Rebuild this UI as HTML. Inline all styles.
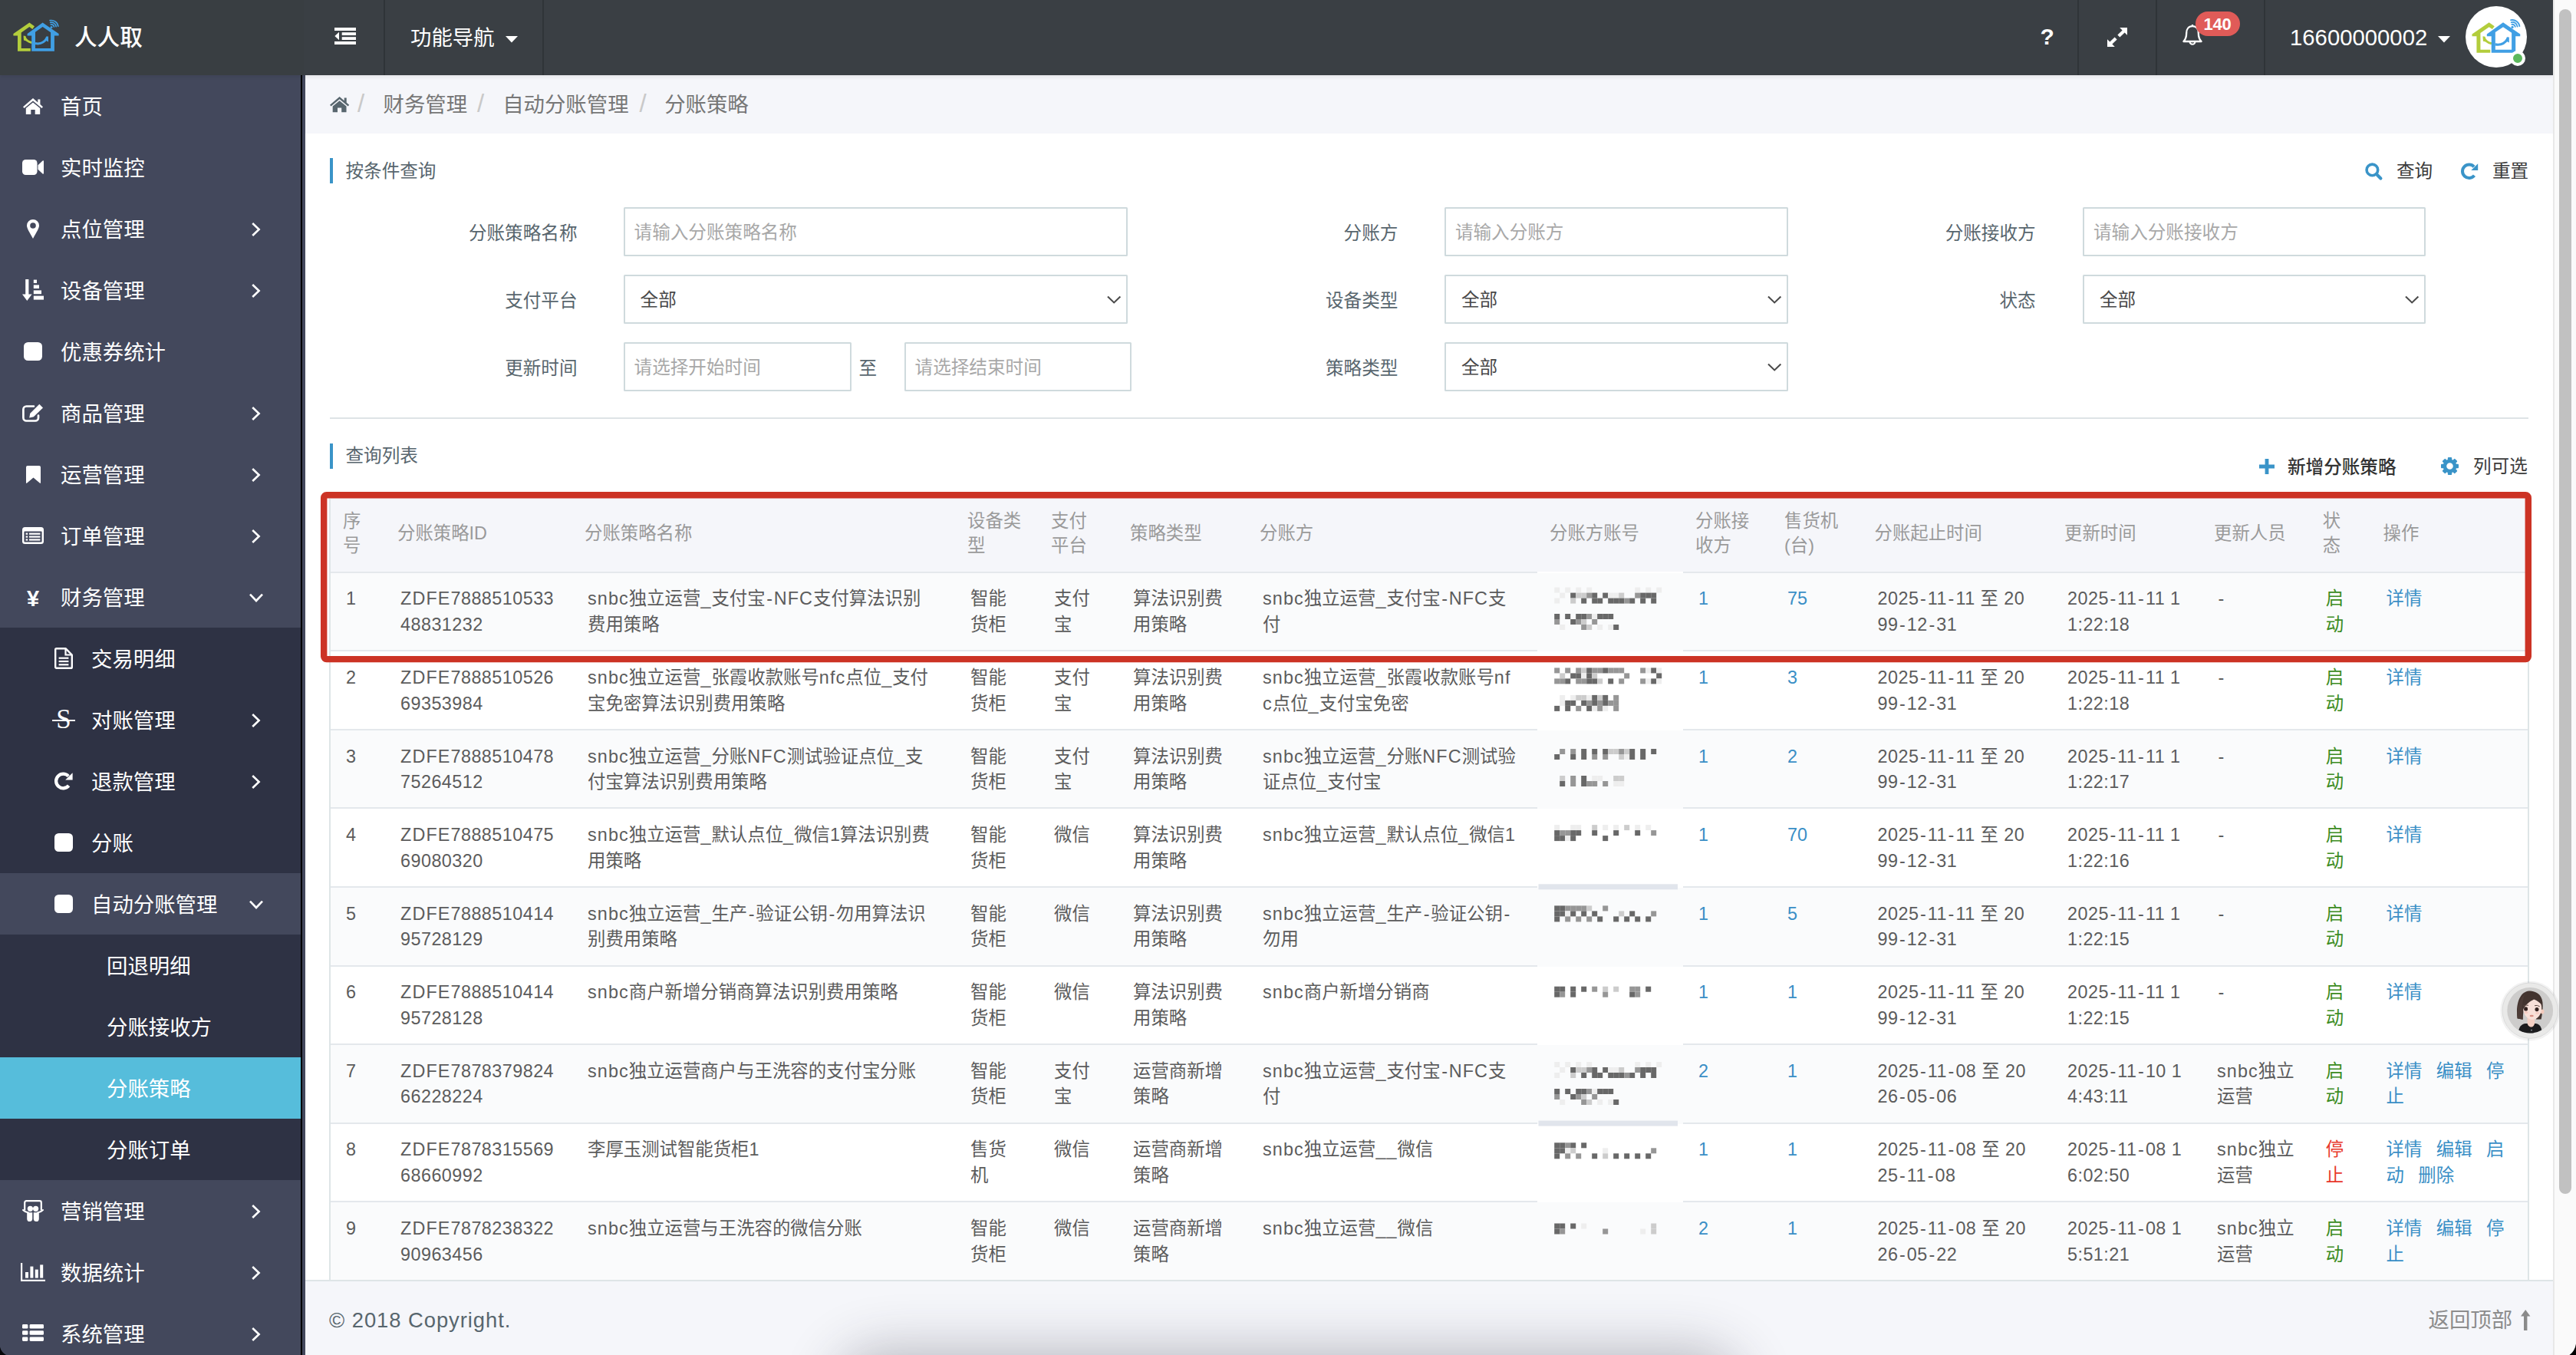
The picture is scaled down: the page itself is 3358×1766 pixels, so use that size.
<!DOCTYPE html>
<html lang="zh-CN">
<head>
<meta charset="utf-8">
<title>分账策略</title>
<style>
*{box-sizing:border-box;margin:0;padding:0}
html,body{width:3358px;height:1766px;background:#f5f6fa}
#app{position:relative;width:3358px;height:1766px;overflow:hidden;background:#f5f6fa}
body{font-family:"Liberation Sans","Noto Sans CJK SC",sans-serif;color:#58666e;font-size:23.6px;position:relative;-webkit-font-smoothing:antialiased}
.abs{position:absolute}
svg{display:block}
.ic{position:absolute;overflow:visible}
/* header */
#hdr{position:absolute;left:0;top:0;width:3328px;height:98px;background:#3a3f44;z-index:5;box-shadow:0 3px 4px rgba(0,0,0,.06)}
#hdr .logo-bg{position:absolute;left:0;top:0;width:396px;height:98px;background:#393e42}
#hdr .vdiv{position:absolute;top:0;width:2px;height:98px;background:#2f3438}
#hdr .t{position:absolute;color:#fff;white-space:nowrap}
/* sidebar */
#side{position:absolute;left:0;top:98px;width:398px;height:1668px;background:#43485c;z-index:4;overflow:hidden}
#side .line{position:absolute;left:392px;top:0;width:2px;height:1668px;background:#000;z-index:3}
#side .sub{position:absolute;left:0;top:720px;width:392px;height:720px;background:#2e3244}
#side .sub .open{position:absolute;left:0;top:320px;width:392px;height:80px;background:#43485c}
#side .sub .act{position:absolute;left:0;top:560px;width:392px;height:80px;background:#56bddb}
.it{position:absolute;left:0;width:392px;height:80px;line-height:82px;color:#fff;font-size:27.4px;white-space:nowrap}
.it .tx{position:absolute;left:79px;top:0}
.it.l2 .tx{left:119px}
.it.l3 .tx{left:139px}
.it svg{position:absolute}
.it .chev{left:326px;top:30px}
/* content */
#crumb{position:absolute;left:398px;top:98px;width:2930px;height:76px;background:#f5f6fa;font-size:27.4px;color:#777;line-height:78px;white-space:nowrap}
#panel{position:absolute;left:398px;top:174px;width:2930px;height:1494px;background:#fff}
#foot{position:absolute;left:398px;top:1668px;width:2930px;height:98px;background:#f5f6fa;border-top:2px solid #dee5e7;font-size:27.4px;line-height:101.5px}

/* table */
.tb{position:absolute;border-collapse:separate;border-spacing:0;table-layout:fixed;width:2868px;border:2px solid #dee5e7;border-top-color:#f5f6fa;font-size:23.4px;color:#5c5c5c}
.tb th{background:#f5f6fa;color:#9a9a9a;font-weight:normal;text-align:left;vertical-align:middle;height:96px;padding:0 0 5px 16px;line-height:32.3px;border-bottom:2px solid #e4e8ec;white-space:nowrap}
.tb td{height:102.55px;vertical-align:top;padding:17.7px 0 0 20px;line-height:33.7px;border-bottom:2px solid #e4e8ec;white-space:nowrap;overflow:hidden}
.tb tbody tr:nth-child(odd) td{background:#fafbfc}
.tb tbody tr:last-child td{border-bottom:none;height:100.5px}
.tb a{color:#3a8fc6}
.tb .g{color:#3c8c22}
.tb .r{color:#e8382c}
.tb td.op a{margin-right:18.4px}
.tb td.num{letter-spacing:.45px}
.tb .la{letter-spacing:1.1px}
.tb .hy{padding:0 1.6px}
.tb td:nth-child(8),.tb th:nth-child(8){border-bottom-color:transparent}
.tb th:nth-child(8){background-clip:padding-box}
/* scrollbar */
#sbar{position:absolute;left:3328px;top:0;width:30px;height:1766px;background:#fafafa;border-left:2px solid #e8e8e8;z-index:6}
#sbar .th{position:absolute;left:6px;top:12px;width:16px;height:1544px;border-radius:8px;background:#c1c1c1}
</style>
</head>
<body>
<div id="app">
<div id="hdr">
  <div class="logo-bg"></div>
  <div class="vdiv" style="left:500px"></div>
  <div class="vdiv" style="left:707px"></div>
  <div class="vdiv" style="left:2708px"></div>
  <div class="vdiv" style="left:2810px"></div>
  <div class="vdiv" style="left:2951px"></div>
  <svg class="ic" style="left:0;top:0" width="3328" height="98" viewBox="0 0 3328 98"><g transform="translate(0.00 0.00) scale(1.0)"><path fill="#b3cd3c" d="M38.3 29.6 L45 34.3 L42.3 37.9 L38.3 35.1 L27.7 42.5 V63 H39.8 V66.8 H23 V46.6 H17.4 V43.9 Z"/><path fill="none" stroke="#b3cd3c" stroke-width="2.9" d="M32 48.2 Q34.5 54 41.4 55.6"/><path fill="#b3cd3c" d="M30.6 46.6 L33.4 47 L34.6 53.4 L31 52.6 Z"/><path fill="#409fe4" fill-rule="evenodd" d="M55.6 29.6 L76.6 43.9 V46.6 H70.9 V66.8 H41.2 V46.6 H35.6 V43.9 Z M55.6 35.1 L46 41.7 V63 H66.1 V42.2 Z"/><path fill="none" stroke="#409fe4" stroke-width="3" d="M46 56.6 Q56 58.4 61.2 49.6"/><path fill="#409fe4" d="M60.2 47.4 L63 47.6 L63 54.4 L58.6 52.2 Z"/><circle cx="67.0" cy="35.4" r="1.5" fill="#409fe4"/><path d="M66.27 31.98 A3.5 3.5 0 0 1 70.47 34.91" fill="none" stroke="#409fe4" stroke-width="1.7" stroke-linecap="round"/><path d="M65.71 29.34 A6.2 6.2 0 0 1 73.14 34.54" fill="none" stroke="#409fe4" stroke-width="1.7" stroke-linecap="round"/><path d="M65.15 26.69 A8.9 8.9 0 0 1 75.81 34.16" fill="none" stroke="#409fe4" stroke-width="1.7" stroke-linecap="round"/></g></svg>
<div class="t" style="left:97px;top:0;line-height:98px;font-size:29.6px;font-weight:500">人人取</div>
<svg class="ic" style="left:436px;top:36px" width="28" height="22" viewBox="0 0 28 22" ><g fill="#fff"><rect x="0" y="0" width="28" height="4"/><rect x="9.7" y="6.2" width="18.3" height="3.8"/><rect x="9.7" y="12.2" width="18.3" height="3.8"/><rect x="0" y="18" width="28" height="4"/><path d="M6 5.7 V16.3 L0.4 11 Z"/></g></svg>
<div class="t" style="left:535px;top:0;line-height:100px;font-size:27.4px">功能导航</div>
<svg class="ic" style="left:659.2px;top:47px" width="16" height="8.4" viewBox="0 0 16 8.4" ><path fill="#fff" d="M0 0 H16 L8 8.4 Z"/></svg>
<div class="t" style="left:2659.5px;top:0;line-height:95px;font-size:30px;font-weight:bold">?</div>
<svg class="ic" style="left:2747px;top:35.6px" width="26" height="25" viewBox="0 0 26 25" ><g fill="#fff"><path d="M16.2 0 H26 V9.8 L22.6 6.4 L16.4 12.4 L13.4 9.4 L19.6 3.4 Z"/><path d="M9.8 25 H0 V15.2 L3.4 18.6 L9.6 12.6 L12.6 15.6 L6.4 21.6 Z"/></g></svg>
<svg class="ic" style="left:2845px;top:31.5px" width="26" height="28" viewBox="0 0 26 28" ><path fill="none" stroke="#fff" stroke-width="2.3" stroke-linejoin="round" d="M13 2.2 C7.6 2.2 5.2 6.4 5.2 11 C5.2 17 3.4 20 1.4 22 H24.6 C22.6 20 20.8 17 20.8 11 C20.8 6.4 18.4 2.2 13 2.2 Z"/><path fill="none" stroke="#fff" stroke-width="2.1" d="M9.6 22.4 A3.4 3.4 0 0 0 16.4 22.4"/><path stroke="#fff" stroke-width="2.2" d="M13 0 V2.4"/></svg>
<div class="abs" style="left:2861.5px;top:14.6px;width:58px;height:32.6px;border-radius:16.3px;background:#e05b58;color:#fff;font-size:22px;font-weight:bold;line-height:33px;text-align:center;letter-spacing:-0.2px">140</div>
<div class="t" style="left:2985px;top:0;line-height:98px;font-size:29.3px;font-weight:normal">16600000002</div>
<svg class="ic" style="left:3178px;top:47px" width="16" height="8.4" viewBox="0 0 16 8.4" ><path fill="#fff" d="M0 0 H16 L8 8.4 Z"/></svg>
<div class="abs" style="left:3214px;top:8px;width:80px;height:80px;border-radius:40px;background:#fff"></div>
<svg class="ic" style="left:0;top:0" width="3328" height="98" viewBox="0 0 3328 98"><g transform="translate(3204.06 -2.08) scale(1.06)"><path fill="#b3cd3c" d="M38.3 29.6 L45 34.3 L42.3 37.9 L38.3 35.1 L27.7 42.5 V63 H39.8 V66.8 H23 V46.6 H17.4 V43.9 Z"/><path fill="none" stroke="#b3cd3c" stroke-width="2.9" d="M32 48.2 Q34.5 54 41.4 55.6"/><path fill="#b3cd3c" d="M30.6 46.6 L33.4 47 L34.6 53.4 L31 52.6 Z"/><path fill="#409fe4" fill-rule="evenodd" d="M55.6 29.6 L76.6 43.9 V46.6 H70.9 V66.8 H41.2 V46.6 H35.6 V43.9 Z M55.6 35.1 L46 41.7 V63 H66.1 V42.2 Z"/><path fill="none" stroke="#409fe4" stroke-width="3" d="M46 56.6 Q56 58.4 61.2 49.6"/><path fill="#409fe4" d="M60.2 47.4 L63 47.6 L63 54.4 L58.6 52.2 Z"/><circle cx="67.0" cy="35.4" r="1.5" fill="#409fe4"/><path d="M66.27 31.98 A3.5 3.5 0 0 1 70.47 34.91" fill="none" stroke="#409fe4" stroke-width="1.7" stroke-linecap="round"/><path d="M65.71 29.34 A6.2 6.2 0 0 1 73.14 34.54" fill="none" stroke="#409fe4" stroke-width="1.7" stroke-linecap="round"/><path d="M65.15 26.69 A8.9 8.9 0 0 1 75.81 34.16" fill="none" stroke="#409fe4" stroke-width="1.7" stroke-linecap="round"/></g></svg>
<div class="abs" style="left:3272.2px;top:66.2px;width:19.6px;height:19.6px;border-radius:10px;background:#5cb85c;border:4px solid #fff"></div>
</div>
<div id="side">
  <div class="sub"><div class="open"></div><div class="act"></div></div>
  <div class="line"></div>
  <div class="it l1" style="top:0.5px"><svg class="ic" style="left:30.0px;top:29.1px" width="26.0" height="21.0" viewBox="0 0 26.0 21.0" ><g fill="#fff" transform="scale(1.0)"><path d="M13 0 L0 11.2 L1.6 13 L13 3.4 L24.4 13 L26 11.2 L22.4 8.1 V1.5 H19.3 V5.4 Z"/><path d="M13 5.4 L3.8 13 V21 H10.3 V15 H15.7 V21 H22.2 V13 Z"/></g></svg><span class="tx">首页</span></div>
<div class="it l1" style="top:80.5px"><svg class="ic" style="left:29.0px;top:29.6px" width="28" height="20" viewBox="0 0 28 20" ><g fill="#fff"><rect x="0" y="0" width="19.5" height="20" rx="4.5"/><path d="M20.5 7.2 L26.6 1.6 Q28 0.6 28 2.4 V17.6 Q28 19.4 26.6 18.4 L20.5 12.8 Z"/></g></svg><span class="tx">实时监控</span></div>
<div class="it l1" style="top:160.5px"><svg class="ic" style="left:35.0px;top:27.1px" width="16" height="25" viewBox="0 0 16 25" ><path fill="#fff" fill-rule="evenodd" d="M8 0 A8 8 0 0 1 16 8 C16 11.5 13 16 8 25 C3 16 0 11.5 0 8 A8 8 0 0 1 8 0 Z M8 4.2 A3.8 3.8 0 1 0 8 11.8 A3.8 3.8 0 1 0 8 4.2 Z"/></svg><span class="tx">点位管理</span><svg class="ic" style="left:326.5px;top:30.299999999999997px" width="14" height="20" viewBox="0 0 14 20" ><path fill="none" stroke="#fff" stroke-width="2.6" d="M2.2 2 L10.6 10 L2.2 18"/></svg></div>
<div class="it l1" style="top:240.5px"><svg class="ic" style="left:29.0px;top:25.6px" width="28" height="28" viewBox="0 0 28 28" ><g fill="#fff"><rect x="4.2" y="0" width="4.2" height="21"/><path d="M0 19.5 H12.6 L6.3 28 Z"/><rect x="14.8" y="0.6" width="4.2" height="4.4"/><rect x="14.8" y="7.4" width="7.2" height="4.6"/><rect x="14.8" y="14.4" width="10.2" height="4.8"/><rect x="14.8" y="21.6" width="13.2" height="5"/></g></svg><span class="tx">设备管理</span><svg class="ic" style="left:326.5px;top:30.299999999999997px" width="14" height="20" viewBox="0 0 14 20" ><path fill="none" stroke="#fff" stroke-width="2.6" d="M2.2 2 L10.6 10 L2.2 18"/></svg></div>
<div class="it l1" style="top:320.5px"><svg class="ic" style="left:31.0px;top:27.6px" width="24" height="24" viewBox="0 0 24 24" ><rect x="0" y="0" width="24" height="24" rx="5.5" fill="#fff"/></svg><span class="tx">优惠券统计</span></div>
<div class="it l1" style="top:400.5px"><svg class="ic" style="left:29.0px;top:27.6px" width="28" height="24" viewBox="0 0 28 24" ><path fill="none" stroke="#fff" stroke-width="2.7" stroke-linecap="round" d="M21 15.5 V18.5 A4 4 0 0 1 17 22.5 H5.4 A4 4 0 0 1 1.4 18.5 V7.5 A4 4 0 0 1 5.4 3.5 H15"/><path fill="#fff" d="M22.3 0.8 L27 5.4 L14.8 17.3 L9.2 18.5 L10.3 12.8 Z"/><path fill="#43485c" d="M12.4 13.6 L14.2 15.3 L11.6 15.9 Z M21 4.4 L22.3 5.6 L14 13.7 L12.8 12.5 Z" opacity=".0"/></svg><span class="tx">商品管理</span><svg class="ic" style="left:326.5px;top:30.299999999999997px" width="14" height="20" viewBox="0 0 14 20" ><path fill="none" stroke="#fff" stroke-width="2.6" d="M2.2 2 L10.6 10 L2.2 18"/></svg></div>
<div class="it l1" style="top:480.5px"><svg class="ic" style="left:33.5px;top:28.1px" width="19" height="23" viewBox="0 0 19 23" ><path fill="#fff" d="M2 0 H17 A2 2 0 0 1 19 2 V22 Q19 23.4 17.8 22.5 L9.5 15.6 L1.2 22.5 Q0 23.4 0 22 V2 A2 2 0 0 1 2 0Z"/></svg><span class="tx">运营管理</span><svg class="ic" style="left:326.5px;top:30.299999999999997px" width="14" height="20" viewBox="0 0 14 20" ><path fill="none" stroke="#fff" stroke-width="2.6" d="M2.2 2 L10.6 10 L2.2 18"/></svg></div>
<div class="it l1" style="top:560.5px"><svg class="ic" style="left:29.0px;top:28.6px" width="28" height="22" viewBox="0 0 28 22" ><rect x="0" y="0" width="28" height="22" rx="3.5" fill="#fff"/><rect x="2.4" y="5.6" width="23.2" height="14" rx="1" fill="#43485c"/><g fill="#fff"><rect x="4.6" y="7.6" width="2.6" height="2.2"/><rect x="9" y="7.6" width="14.4" height="2.2"/><rect x="4.6" y="11.5" width="2.6" height="2.2"/><rect x="9" y="11.5" width="14.4" height="2.2"/><rect x="4.6" y="15.4" width="2.6" height="2.2"/><rect x="9" y="15.4" width="14.4" height="2.2"/></g></svg><span class="tx">订单管理</span><svg class="ic" style="left:326.5px;top:30.299999999999997px" width="14" height="20" viewBox="0 0 14 20" ><path fill="none" stroke="#fff" stroke-width="2.6" d="M2.2 2 L10.6 10 L2.2 18"/></svg></div>
<div class="it l1" style="top:640.5px"><span class="abs" style="left:33px;top:0;width:20px;text-align:center;font-weight:bold;font-size:29px">¥</span><span class="tx">财务管理</span><svg class="ic" style="left:323.7px;top:33.3px" width="20" height="14" viewBox="0 0 20 14" ><path fill="none" stroke="#fff" stroke-width="2.6" d="M2 2.6 L10.0 11 L18 2.6"/></svg></div>
<div class="it l2" style="top:720.5px"><svg class="ic" style="left:71.0px;top:25.6px" width="24" height="28" viewBox="0 0 24 28" ><path fill="none" stroke="#fff" stroke-width="2.4" stroke-linejoin="round" d="M1.2 2.6 A1.4 1.4 0 0 1 2.6 1.2 H14.5 L22.8 9.5 V25.4 A1.4 1.4 0 0 1 21.4 26.8 H2.6 A1.4 1.4 0 0 1 1.2 25.4 Z"/><path fill="none" stroke="#fff" stroke-width="2.2" d="M14.5 1.2 V9.5 H22.8"/><g fill="#fff"><rect x="5.6" y="12.6" width="12.8" height="2.2"/><rect x="5.6" y="16.9" width="12.8" height="2.2"/><rect x="5.6" y="21.2" width="12.8" height="2.2"/></g></svg><span class="tx">交易明细</span></div>
<div class="it l2" style="top:800.5px"><span class="abs" style="left:71px;top:-2px;width:24px;text-align:center;font-family:'Liberation Serif',serif;font-size:35px">S</span><span class="abs" style="left:68px;top:39px;width:30px;height:2.4px;background:#fff"></span><span class="tx">对账管理</span><svg class="ic" style="left:326.5px;top:30.299999999999997px" width="14" height="20" viewBox="0 0 14 20" ><path fill="none" stroke="#fff" stroke-width="2.6" d="M2.2 2 L10.6 10 L2.2 18"/></svg></div>
<div class="it l2" style="top:880.5px"><svg class="ic" style="left:71.0px;top:27.6px" width="24.0" height="24.0" viewBox="0 0 24.0 24.0" ><g transform="scale(1.0)"><path fill="none" stroke="#fff" stroke-width="4.3" d="M18.6 17.9 A9.3 9.3 0 1 1 18.2 5.6"/><path fill="#fff" d="M23.6 1.2 V10.6 H14.2 Z"/></g></svg><span class="tx">退款管理</span><svg class="ic" style="left:326.5px;top:30.299999999999997px" width="14" height="20" viewBox="0 0 14 20" ><path fill="none" stroke="#fff" stroke-width="2.6" d="M2.2 2 L10.6 10 L2.2 18"/></svg></div>
<div class="it l2" style="top:960.5px"><svg class="ic" style="left:71.0px;top:27.6px" width="24" height="24" viewBox="0 0 24 24" ><rect x="0" y="0" width="24" height="24" rx="5.5" fill="#fff"/></svg><span class="tx">分账</span></div>
<div class="it l2" style="top:1040.5px"><svg class="ic" style="left:71.0px;top:27.6px" width="24" height="24" viewBox="0 0 24 24" ><rect x="0" y="0" width="24" height="24" rx="5.5" fill="#fff"/></svg><span class="tx">自动分账管理</span><svg class="ic" style="left:323.7px;top:33.3px" width="20" height="14" viewBox="0 0 20 14" ><path fill="none" stroke="#fff" stroke-width="2.6" d="M2 2.6 L10.0 11 L18 2.6"/></svg></div>
<div class="it l3" style="top:1120.5px"><span class="tx">回退明细</span></div>
<div class="it l3" style="top:1200.5px"><span class="tx">分账接收方</span></div>
<div class="it l3" style="top:1280.5px"><span class="tx">分账策略</span></div>
<div class="it l3" style="top:1360.5px"><span class="tx">分账订单</span></div>
<div class="it l1" style="top:1440.5px"><svg class="ic" style="left:29.0px;top:25.6px" width="28" height="28" viewBox="0 0 28 28" ><path fill="none" stroke="#fff" stroke-width="2.2" stroke-linejoin="round" d="M3.2 13.5 V3.4 A2.2 2.2 0 0 1 5.4 1.2 H22.6 A2.2 2.2 0 0 1 24.8 3.4 V13.5"/><path fill="none" stroke="#fff" stroke-width="2" stroke-linecap="round" d="M1 13 Q4 16 8 16.6 M27 13 Q24 16 20 16.6"/><circle cx="10.4" cy="11.3" r="3.6" fill="#fff"/><circle cx="17.6" cy="11.3" r="3.6" fill="#fff"/><path fill="#fff" d="M6.2 16.2 H13.2 V24.6 A3.4 3.4 0 0 1 9.8 28 A3.6 3.6 0 0 1 6.2 24.4 Z M14.8 16.2 H21.8 V24.4 A3.6 3.6 0 0 1 18.2 28 A3.4 3.4 0 0 1 14.8 24.6 Z"/></svg><span class="tx">营销管理</span><svg class="ic" style="left:326.5px;top:30.299999999999997px" width="14" height="20" viewBox="0 0 14 20" ><path fill="none" stroke="#fff" stroke-width="2.6" d="M2.2 2 L10.6 10 L2.2 18"/></svg></div>
<div class="it l1" style="top:1520.5px"><svg class="ic" style="left:27.0px;top:27.6px" width="32" height="24" viewBox="0 0 32 24" ><g fill="#fff"><rect x="0" y="0" width="2.2" height="24"/><rect x="0" y="21.8" width="32" height="2.2"/><rect x="6" y="12" width="4" height="7.6"/><rect x="12.4" y="4.6" width="4" height="15"/><rect x="18.8" y="8.6" width="4" height="11"/><rect x="25.2" y="2.4" width="4" height="17.2"/></g></svg><span class="tx">数据统计</span><svg class="ic" style="left:326.5px;top:30.299999999999997px" width="14" height="20" viewBox="0 0 14 20" ><path fill="none" stroke="#fff" stroke-width="2.6" d="M2.2 2 L10.6 10 L2.2 18"/></svg></div>
<div class="it l1" style="top:1600.5px"><svg class="ic" style="left:29.0px;top:27.700000000000003px" width="28" height="22" viewBox="0 0 28 22" ><rect x="0" y="0" width="7.4" height="5.6" rx="1.4" fill="#fff"/><rect x="9.6" y="0" width="18.4" height="5.6" rx="1.4" fill="#fff"/><rect x="0" y="8.2" width="7.4" height="5.6" rx="1.4" fill="#fff"/><rect x="9.6" y="8.2" width="18.4" height="5.6" rx="1.4" fill="#fff"/><rect x="0" y="16.4" width="7.4" height="5.6" rx="1.4" fill="#fff"/><rect x="9.6" y="16.4" width="18.4" height="5.6" rx="1.4" fill="#fff"/></svg><span class="tx">系统管理</span><svg class="ic" style="left:326.5px;top:30.299999999999997px" width="14" height="20" viewBox="0 0 14 20" ><path fill="none" stroke="#fff" stroke-width="2.6" d="M2.2 2 L10.6 10 L2.2 18"/></svg></div>
</div>
<div id="crumb"><svg class="ic" style="left:32.39px;top:27.814999999999998px" width="25.22" height="20.37" viewBox="0 0 25.22 20.37" ><g fill="#58666e" transform="scale(0.97)"><path d="M13 0 L0 11.2 L1.6 13 L13 3.4 L24.4 13 L26 11.2 L22.4 8.1 V1.5 H19.3 V5.4 Z"/><path d="M13 5.4 L3.8 13 V21 H10.3 V15 H15.7 V21 H22.2 V13 Z"/></g></svg><span class="abs" style="left:68.0px;top:-2px;color:#c9c9c9;font-size:33px">/</span><span class="abs" style="left:101.5px;top:0">财务管理</span><span class="abs" style="left:224.0px;top:-2px;color:#c9c9c9;font-size:33px">/</span><span class="abs" style="left:257.20000000000005px;top:0">自动分账管理</span><span class="abs" style="left:435.5px;top:-2px;color:#c9c9c9;font-size:33px">/</span><span class="abs" style="left:468.20000000000005px;top:0">分账策略</span></div>
<div id="panel"><div class="abs" style="left:32px;top:32px;width:4.3px;height:33px;background:#3a94c8;"></div><div class="abs" style="left:52.5px;top:28.80000000000001px;height:40px;line-height:40px;white-space:nowrap;">按条件查询</div><svg class="ic" style="left:2685px;top:38px" width="23" height="23" viewBox="0 0 23 23" ><circle cx="9.4" cy="9.4" r="7.3" fill="none" stroke="#3a94c8" stroke-width="3.6"/><path stroke="#3a94c8" stroke-width="4.2" stroke-linecap="round" d="M15.2 15.2 L20.4 20.4"/></svg><div class="abs" style="left:2726px;top:28.5px;height:40px;line-height:40px;color:#3b3b3b;white-space:nowrap;">查询</div><div class="abs" style="left:2810px;top:37.5px;width:0px;height:0px;"><svg class="ic" style="left:0.22000000000000064px;top:0.22000000000000064px" width="22.56" height="22.56" viewBox="0 0 22.56 22.56" ><g transform="scale(0.94)"><path fill="none" stroke="#3a94c8" stroke-width="4.3" d="M18.6 17.9 A9.3 9.3 0 1 1 18.2 5.6"/><path fill="#3a94c8" d="M23.6 1.2 V10.6 H14.2 Z"/></g></svg></div><div class="abs" style="left:2851px;top:28.5px;height:40px;line-height:40px;color:#3b3b3b;white-space:nowrap;">重置</div><div class="abs" style="left:54.5px;top:110.19999999999999px;width:300px;height:40px;line-height:40px;text-align:right;white-space:nowrap;">分账策略名称</div><div class="abs" style="left:415px;top:96px;width:657px;height:63.6px;border:2px solid #cfdadd;border-radius:1.5px;background:#fff;"></div><div class="abs" style="left:428.6px;top:96px;height:63.6px;line-height:67.1px;color:#a8a8a8;white-space:nowrap;">请输入分账策略名称</div><div class="abs" style="left:1124.4px;top:110.19999999999999px;width:300px;height:40px;line-height:40px;text-align:right;white-space:nowrap;">分账方</div><div class="abs" style="left:1485.3px;top:96px;width:447.70000000000005px;height:63.6px;border:2px solid #cfdadd;border-radius:1.5px;background:#fff;"></div><div class="abs" style="left:1498.8999999999999px;top:96px;height:63.6px;line-height:67.1px;color:#a8a8a8;white-space:nowrap;">请输入分账方</div><div class="abs" style="left:1955.6px;top:110.19999999999999px;width:300px;height:40px;line-height:40px;text-align:right;white-space:nowrap;">分账接收方</div><div class="abs" style="left:2317.4px;top:96px;width:446.1999999999998px;height:63.6px;border:2px solid #cfdadd;border-radius:1.5px;background:#fff;"></div><div class="abs" style="left:2331.0px;top:96px;height:63.6px;line-height:67.1px;color:#a8a8a8;white-space:nowrap;">请输入分账接收方</div><div class="abs" style="left:54.5px;top:198.39999999999998px;width:300px;height:40px;line-height:40px;text-align:right;white-space:nowrap;">支付平台</div><div class="abs" style="left:415px;top:184.2px;width:657px;height:63.6px;border:2px solid #cfdadd;border-radius:1.5px;background:#fff;"></div><div class="abs" style="left:436.6px;top:184.2px;height:63.6px;line-height:67.1px;color:#484848;white-space:nowrap;">全部</div><svg class="ic" style="left:1044.2px;top:210.39999999999998px" width="20.4" height="13.4" viewBox="0 0 20.4 13.4" ><path fill="none" stroke="#4a4a4a" stroke-width="2.1" d="M2 2.6 L10.2 10.4 L18.4 2.6"/></svg><div class="abs" style="left:1124.4px;top:198.39999999999998px;width:300px;height:40px;line-height:40px;text-align:right;white-space:nowrap;">设备类型</div><div class="abs" style="left:1485.3px;top:184.2px;width:447.70000000000005px;height:63.6px;border:2px solid #cfdadd;border-radius:1.5px;background:#fff;"></div><div class="abs" style="left:1506.8999999999999px;top:184.2px;height:63.6px;line-height:67.1px;color:#484848;white-space:nowrap;">全部</div><svg class="ic" style="left:1905.2px;top:210.39999999999998px" width="20.4" height="13.4" viewBox="0 0 20.4 13.4" ><path fill="none" stroke="#4a4a4a" stroke-width="2.1" d="M2 2.6 L10.2 10.4 L18.4 2.6"/></svg><div class="abs" style="left:1955.6px;top:198.39999999999998px;width:300px;height:40px;line-height:40px;text-align:right;white-space:nowrap;">状态</div><div class="abs" style="left:2317.4px;top:184.2px;width:446.1999999999998px;height:63.6px;border:2px solid #cfdadd;border-radius:1.5px;background:#fff;"></div><div class="abs" style="left:2339.0px;top:184.2px;height:63.6px;line-height:67.1px;color:#484848;white-space:nowrap;">全部</div><svg class="ic" style="left:2735.8px;top:210.39999999999998px" width="20.4" height="13.4" viewBox="0 0 20.4 13.4" ><path fill="none" stroke="#4a4a4a" stroke-width="2.1" d="M2 2.6 L10.2 10.4 L18.4 2.6"/></svg><div class="abs" style="left:54.5px;top:286.4px;width:300px;height:40px;line-height:40px;text-align:right;white-space:nowrap;">更新时间</div><div class="abs" style="left:415px;top:272.2px;width:296.70000000000005px;height:63.6px;border:2px solid #cfdadd;border-radius:1.5px;background:#fff;"></div><div class="abs" style="left:428.6px;top:272.2px;height:63.6px;line-height:67.1px;color:#a8a8a8;white-space:nowrap;">请选择开始时间</div><div class="abs" style="left:721.5999999999999px;top:272.2px;height:63.6px;line-height:69px;white-space:nowrap;">至</div><div class="abs" style="left:781px;top:272.2px;width:296px;height:63.6px;border:2px solid #cfdadd;border-radius:1.5px;background:#fff;"></div><div class="abs" style="left:794.5999999999999px;top:272.2px;height:63.6px;line-height:67.1px;color:#a8a8a8;white-space:nowrap;">请选择结束时间</div><div class="abs" style="left:1124.4px;top:286.4px;width:300px;height:40px;line-height:40px;text-align:right;white-space:nowrap;">策略类型</div><div class="abs" style="left:1485.3px;top:272.2px;width:447.70000000000005px;height:63.6px;border:2px solid #cfdadd;border-radius:1.5px;background:#fff;"></div><div class="abs" style="left:1506.8999999999999px;top:272.2px;height:63.6px;line-height:67.1px;color:#484848;white-space:nowrap;">全部</div><svg class="ic" style="left:1905.2px;top:298.4px" width="20.4" height="13.4" viewBox="0 0 20.4 13.4" ><path fill="none" stroke="#4a4a4a" stroke-width="2.1" d="M2 2.6 L10.2 10.4 L18.4 2.6"/></svg><div class="abs" style="left:32px;top:369.6px;width:2866px;height:2px;background:#dee3e6;"></div><div class="abs" style="left:32px;top:403.6px;width:4.3px;height:33.4px;background:#3a94c8;"></div><div class="abs" style="left:52.5px;top:400.29999999999995px;height:40px;line-height:40px;white-space:nowrap;">查询列表</div><svg class="ic" style="left:2547px;top:424.4px" width="20" height="20" viewBox="0 0 20 20" ><path fill="#3a94c8" d="M7.6 0 H12.4 V7.6 H20 V12.4 H12.4 V20 H7.6 V12.4 H0 V7.6 H7.6 Z"/></svg><div class="abs" style="left:2584px;top:414.6px;height:40px;line-height:40px;color:#333;font-weight:500;white-space:nowrap;">新增分账策略</div><svg class="ic" style="left:2784px;top:421.6px" width="23" height="23" viewBox="0 0 23 23" ><g fill="#3a94c8"><rect x="8.8" y="0" width="5.4" height="6" rx="1" transform="rotate(0 11.5 11.5)"/><rect x="8.8" y="0" width="5.4" height="6" rx="1" transform="rotate(45 11.5 11.5)"/><rect x="8.8" y="0" width="5.4" height="6" rx="1" transform="rotate(90 11.5 11.5)"/><rect x="8.8" y="0" width="5.4" height="6" rx="1" transform="rotate(135 11.5 11.5)"/><rect x="8.8" y="0" width="5.4" height="6" rx="1" transform="rotate(180 11.5 11.5)"/><rect x="8.8" y="0" width="5.4" height="6" rx="1" transform="rotate(225 11.5 11.5)"/><rect x="8.8" y="0" width="5.4" height="6" rx="1" transform="rotate(270 11.5 11.5)"/><rect x="8.8" y="0" width="5.4" height="6" rx="1" transform="rotate(315 11.5 11.5)"/></g><circle cx="11.5" cy="11.5" r="6.6" fill="none" stroke="#3a94c8" stroke-width="4.6"/></svg><div class="abs" style="left:2826px;top:414px;height:40px;line-height:40px;color:#3b3b3b;white-space:nowrap;">列可选</div><table class="tb" style="left:31px;top:474.79999999999995px"><colgroup><col style="width:71px"><col style="width:244px"><col style="width:499px"><col style="width:109px"><col style="width:103px"><col style="width:169px"><col style="width:378px"><col style="width:190px"><col style="width:116px"><col style="width:117.5px"><col style="width:247.5px"><col style="width:195px"><col style="width:141.7px"><col style="width:78.9px"><col style="width:204.4px"></colgroup><thead><tr><th>序<br>号</th><th>分账策略ID</th><th>分账策略名称</th><th>设备类<br>型</th><th>支付<br>平台</th><th>策略类型</th><th>分账方</th><th>分账方账号</th><th>分账接<br>收方</th><th>售货机<br>(台)</th><th>分账起止时间</th><th>更新时间</th><th>更新人员</th><th>状<br>态</th><th>操作</th></tr></thead><tbody><tr><td>1</td><td class="num"><span class="la">ZDFE</span>7888510533<br>48831232</td><td><span class="la">snbc</span>独立运营<span class="la">_</span>支付宝<span class="hy">-</span><span class="la">NFC</span>支付算法识别<br>费用策略</td><td>智能<br>货柜</td><td>支付<br>宝</td><td>算法识别费<br>用策略</td><td><span class="la">snbc</span>独立运营<span class="la">_</span>支付宝<span class="hy">-</span><span class="la">NFC</span>支<br>付</td><td></td><td><a>1</a></td><td><a>75</a></td><td class="num">2025<span class="hy">-</span>11<span class="hy">-</span>11 至 20<br>99<span class="hy">-</span>12<span class="hy">-</span>31</td><td class="num">2025<span class="hy">-</span>11<span class="hy">-</span>11 1<br>1:22:18</td><td><span class="hy">-</span></td><td><span class="g">启<br>动</span></td><td class="op"><a>详情</a></td></tr><tr><td>2</td><td class="num"><span class="la">ZDFE</span>7888510526<br>69353984</td><td><span class="la">snbc</span>独立运营<span class="la">_</span>张霞收款账号<span class="la">nfc</span>点位<span class="la">_</span>支付<br>宝免密算法识别费用策略</td><td>智能<br>货柜</td><td>支付<br>宝</td><td>算法识别费<br>用策略</td><td><span class="la">snbc</span>独立运营<span class="la">_</span>张霞收款账号<span class="la">nf</span><br><span class="la">c</span>点位<span class="la">_</span>支付宝免密</td><td></td><td><a>1</a></td><td><a>3</a></td><td class="num">2025<span class="hy">-</span>11<span class="hy">-</span>11 至 20<br>99<span class="hy">-</span>12<span class="hy">-</span>31</td><td class="num">2025<span class="hy">-</span>11<span class="hy">-</span>11 1<br>1:22:18</td><td><span class="hy">-</span></td><td><span class="g">启<br>动</span></td><td class="op"><a>详情</a></td></tr><tr><td>3</td><td class="num"><span class="la">ZDFE</span>7888510478<br>75264512</td><td><span class="la">snbc</span>独立运营<span class="la">_</span>分账<span class="la">NFC</span>测试验证点位<span class="la">_</span>支<br>付宝算法识别费用策略</td><td>智能<br>货柜</td><td>支付<br>宝</td><td>算法识别费<br>用策略</td><td><span class="la">snbc</span>独立运营<span class="la">_</span>分账<span class="la">NFC</span>测试验<br>证点位<span class="la">_</span>支付宝</td><td></td><td><a>1</a></td><td><a>2</a></td><td class="num">2025<span class="hy">-</span>11<span class="hy">-</span>11 至 20<br>99<span class="hy">-</span>12<span class="hy">-</span>31</td><td class="num">2025<span class="hy">-</span>11<span class="hy">-</span>11 1<br>1:22:17</td><td><span class="hy">-</span></td><td><span class="g">启<br>动</span></td><td class="op"><a>详情</a></td></tr><tr><td>4</td><td class="num"><span class="la">ZDFE</span>7888510475<br>69080320</td><td><span class="la">snbc</span>独立运营<span class="la">_</span>默认点位<span class="la">_</span>微信1算法识别费<br>用策略</td><td>智能<br>货柜</td><td>微信</td><td>算法识别费<br>用策略</td><td><span class="la">snbc</span>独立运营<span class="la">_</span>默认点位<span class="la">_</span>微信1</td><td></td><td><a>1</a></td><td><a>70</a></td><td class="num">2025<span class="hy">-</span>11<span class="hy">-</span>11 至 20<br>99<span class="hy">-</span>12<span class="hy">-</span>31</td><td class="num">2025<span class="hy">-</span>11<span class="hy">-</span>11 1<br>1:22:16</td><td><span class="hy">-</span></td><td><span class="g">启<br>动</span></td><td class="op"><a>详情</a></td></tr><tr><td>5</td><td class="num"><span class="la">ZDFE</span>7888510414<br>95728129</td><td><span class="la">snbc</span>独立运营<span class="la">_</span>生产<span class="hy">-</span>验证公钥<span class="hy">-</span>勿用算法识<br>别费用策略</td><td>智能<br>货柜</td><td>微信</td><td>算法识别费<br>用策略</td><td><span class="la">snbc</span>独立运营<span class="la">_</span>生产<span class="hy">-</span>验证公钥<span class="hy">-</span><br>勿用</td><td></td><td><a>1</a></td><td><a>5</a></td><td class="num">2025<span class="hy">-</span>11<span class="hy">-</span>11 至 20<br>99<span class="hy">-</span>12<span class="hy">-</span>31</td><td class="num">2025<span class="hy">-</span>11<span class="hy">-</span>11 1<br>1:22:15</td><td><span class="hy">-</span></td><td><span class="g">启<br>动</span></td><td class="op"><a>详情</a></td></tr><tr><td>6</td><td class="num"><span class="la">ZDFE</span>7888510414<br>95728128</td><td><span class="la">snbc</span>商户新增分销商算法识别费用策略</td><td>智能<br>货柜</td><td>微信</td><td>算法识别费<br>用策略</td><td><span class="la">snbc</span>商户新增分销商</td><td></td><td><a>1</a></td><td><a>1</a></td><td class="num">2025<span class="hy">-</span>11<span class="hy">-</span>11 至 20<br>99<span class="hy">-</span>12<span class="hy">-</span>31</td><td class="num">2025<span class="hy">-</span>11<span class="hy">-</span>11 1<br>1:22:15</td><td><span class="hy">-</span></td><td><span class="g">启<br>动</span></td><td class="op"><a>详情</a></td></tr><tr><td>7</td><td class="num"><span class="la">ZDFE</span>7878379824<br>66228224</td><td><span class="la">snbc</span>独立运营商户与王洗容的支付宝分账</td><td>智能<br>货柜</td><td>支付<br>宝</td><td>运营商新增<br>策略</td><td><span class="la">snbc</span>独立运营<span class="la">_</span>支付宝<span class="hy">-</span><span class="la">NFC</span>支<br>付</td><td></td><td><a>2</a></td><td><a>1</a></td><td class="num">2025<span class="hy">-</span>11<span class="hy">-</span>08 至 20<br>26<span class="hy">-</span>05<span class="hy">-</span>06</td><td class="num">2025<span class="hy">-</span>11<span class="hy">-</span>10 1<br>4:43:11</td><td><span class="la">snbc</span>独立<br>运营</td><td><span class="g">启<br>动</span></td><td class="op"><a>详情</a><a>编辑</a><a>停<br>止</a></td></tr><tr><td>8</td><td class="num"><span class="la">ZDFE</span>7878315569<br>68660992</td><td>李厚玉测试智能货柜1</td><td>售货<br>机</td><td>微信</td><td>运营商新增<br>策略</td><td><span class="la">snbc</span>独立运营<span class="la">__</span>微信</td><td></td><td><a>1</a></td><td><a>1</a></td><td class="num">2025<span class="hy">-</span>11<span class="hy">-</span>08 至 20<br>25<span class="hy">-</span>11<span class="hy">-</span>08</td><td class="num">2025<span class="hy">-</span>11<span class="hy">-</span>08 1<br>6:02:50</td><td><span class="la">snbc</span>独立<br>运营</td><td><span class="r">停<br>止</span></td><td class="op"><a>详情</a><a>编辑</a><a>启<br>动</a><a>删除</a></td></tr><tr><td>9</td><td class="num"><span class="la">ZDFE</span>7878238322<br>90963456</td><td><span class="la">snbc</span>独立运营与王洗容的微信分账</td><td>智能<br>货柜</td><td>微信</td><td>运营商新增<br>策略</td><td><span class="la">snbc</span>独立运营<span class="la">__</span>微信</td><td></td><td><a>2</a></td><td><a>1</a></td><td class="num">2025<span class="hy">-</span>11<span class="hy">-</span>08 至 20<br>26<span class="hy">-</span>05<span class="hy">-</span>22</td><td class="num">2025<span class="hy">-</span>11<span class="hy">-</span>08 1<br>5:51:21</td><td><span class="la">snbc</span>独立<br>运营</td><td><span class="g">启<br>动</span></td><td class="op"><a>详情</a><a>编辑</a><a>停<br>止</a></td></tr></tbody></table></div>
<div id="foot"><span class="abs" style="left:31px;top:0;letter-spacing:.95px">© 2018 Copyright.</span><span class="abs" style="left:2767.5px;top:0;color:#8c8c8c">返回顶部</span><svg class="ic" style="left:2887px;top:37px" width="14" height="28" viewBox="0 0 14 28" ><g fill="#8a8a8a"><rect x="5" y="6" width="4.4" height="21"/><path d="M7.2 0 L13.4 8.6 H1 Z"/></g></svg></div>
<div id="sbar"><div class="th"></div></div>
<svg class="ic" style="left:410px;top:633px;z-index:4" width="2900" height="240" viewBox="410 633 2900 240"><rect x="422.2" y="645.2" width="2873.6" height="213.9" rx="3.5" fill="none" stroke="#cc3325" stroke-width="8.4"/></svg><svg class="ic" style="left:2005px;top:740px;z-index:3" width="185" height="930" viewBox="0 0 185 930"><rect x="0.5" y="412.29999999999995" width="181.5" height="7" fill="#e1e5ec"/><rect x="0.5" y="720.5999999999999" width="181.5" height="7" fill="#e1e5ec"/><rect x="21.2" y="25.6" width="7.0" height="7.0" fill="rgb(238,238,238)"/><rect x="35.2" y="25.6" width="7.0" height="7.0" fill="rgb(238,238,238)"/><rect x="49.2" y="25.6" width="7.0" height="7.0" fill="rgb(238,238,238)"/><rect x="63.2" y="25.6" width="7.0" height="7.0" fill="rgb(238,238,238)"/><rect x="126.2" y="25.6" width="7.0" height="7.0" fill="rgb(238,238,238)"/><rect x="140.2" y="25.6" width="7.0" height="7.0" fill="rgb(238,238,238)"/><rect x="154.2" y="25.6" width="7.0" height="7.0" fill="rgb(238,238,238)"/><rect x="28.2" y="32.6" width="7.0" height="7.0" fill="rgb(238,238,238)"/><rect x="42.2" y="32.6" width="7.0" height="7.0" fill="rgb(104,104,104)"/><rect x="49.2" y="32.6" width="7.0" height="7.0" fill="rgb(204,204,204)"/><rect x="56.2" y="32.6" width="7.0" height="7.0" fill="rgb(204,204,204)"/><rect x="63.2" y="32.6" width="7.0" height="7.0" fill="rgb(150,150,150)"/><rect x="70.2" y="32.6" width="7.0" height="7.0" fill="rgb(104,104,104)"/><rect x="84.2" y="32.6" width="7.0" height="7.0" fill="rgb(104,104,104)"/><rect x="91.2" y="32.6" width="7.0" height="7.0" fill="rgb(238,238,238)"/><rect x="98.2" y="32.6" width="7.0" height="7.0" fill="rgb(238,238,238)"/><rect x="105.2" y="32.6" width="7.0" height="7.0" fill="rgb(204,204,204)"/><rect x="126.2" y="32.6" width="7.0" height="7.0" fill="rgb(150,150,150)"/><rect x="133.2" y="32.6" width="7.0" height="7.0" fill="rgb(104,104,104)"/><rect x="140.2" y="32.6" width="7.0" height="7.0" fill="rgb(104,104,104)"/><rect x="147.2" y="32.6" width="7.0" height="7.0" fill="rgb(104,104,104)"/><rect x="21.2" y="39.6" width="7.0" height="7.0" fill="rgb(238,238,238)"/><rect x="42.2" y="39.6" width="7.0" height="7.0" fill="rgb(204,204,204)"/><rect x="56.2" y="39.6" width="7.0" height="7.0" fill="rgb(104,104,104)"/><rect x="70.2" y="39.6" width="7.0" height="7.0" fill="rgb(104,104,104)"/><rect x="77.2" y="39.6" width="7.0" height="7.0" fill="rgb(104,104,104)"/><rect x="91.2" y="39.6" width="7.0" height="7.0" fill="rgb(104,104,104)"/><rect x="98.2" y="39.6" width="7.0" height="7.0" fill="rgb(104,104,104)"/><rect x="105.2" y="39.6" width="7.0" height="7.0" fill="rgb(104,104,104)"/><rect x="112.2" y="39.6" width="7.0" height="7.0" fill="rgb(150,150,150)"/><rect x="119.2" y="39.6" width="7.0" height="7.0" fill="rgb(104,104,104)"/><rect x="133.2" y="39.6" width="7.0" height="7.0" fill="rgb(104,104,104)"/><rect x="147.2" y="39.6" width="7.0" height="7.0" fill="rgb(104,104,104)"/><rect x="21.2" y="60.0" width="7.0" height="7.0" fill="rgb(104,104,104)"/><rect x="35.2" y="60.0" width="7.0" height="7.0" fill="rgb(104,104,104)"/><rect x="49.2" y="60.0" width="7.0" height="7.0" fill="rgb(104,104,104)"/><rect x="56.2" y="60.0" width="7.0" height="7.0" fill="rgb(104,104,104)"/><rect x="63.2" y="60.0" width="7.0" height="7.0" fill="rgb(150,150,150)"/><rect x="70.2" y="60.0" width="7.0" height="7.0" fill="rgb(238,238,238)"/><rect x="77.2" y="60.0" width="7.0" height="7.0" fill="rgb(104,104,104)"/><rect x="84.2" y="60.0" width="7.0" height="7.0" fill="rgb(104,104,104)"/><rect x="91.2" y="60.0" width="7.0" height="7.0" fill="rgb(104,104,104)"/><rect x="21.2" y="67.0" width="7.0" height="7.0" fill="rgb(150,150,150)"/><rect x="42.2" y="67.0" width="7.0" height="7.0" fill="rgb(104,104,104)"/><rect x="49.2" y="67.0" width="7.0" height="7.0" fill="rgb(150,150,150)"/><rect x="56.2" y="67.0" width="7.0" height="7.0" fill="rgb(204,204,204)"/><rect x="70.2" y="67.0" width="7.0" height="7.0" fill="rgb(150,150,150)"/><rect x="28.2" y="74.0" width="7.0" height="7.0" fill="rgb(238,238,238)"/><rect x="56.2" y="74.0" width="7.0" height="7.0" fill="rgb(150,150,150)"/><rect x="63.2" y="74.0" width="7.0" height="7.0" fill="rgb(204,204,204)"/><rect x="77.2" y="74.0" width="7.0" height="7.0" fill="rgb(238,238,238)"/><rect x="91.2" y="74.0" width="7.0" height="7.0" fill="rgb(238,238,238)"/><rect x="98.2" y="74.0" width="7.0" height="7.0" fill="rgb(104,104,104)"/><rect x="21.2" y="130.4" width="7.0" height="7.0" fill="rgb(150,150,150)"/><rect x="35.2" y="130.4" width="7.0" height="7.0" fill="rgb(150,150,150)"/><rect x="49.2" y="130.4" width="7.0" height="7.0" fill="rgb(150,150,150)"/><rect x="56.2" y="130.4" width="7.0" height="7.0" fill="rgb(204,204,204)"/><rect x="63.2" y="130.4" width="7.0" height="7.0" fill="rgb(104,104,104)"/><rect x="70.2" y="130.4" width="7.0" height="7.0" fill="rgb(150,150,150)"/><rect x="77.2" y="130.4" width="7.0" height="7.0" fill="rgb(150,150,150)"/><rect x="84.2" y="130.4" width="7.0" height="7.0" fill="rgb(104,104,104)"/><rect x="91.2" y="130.4" width="7.0" height="7.0" fill="rgb(150,150,150)"/><rect x="98.2" y="130.4" width="7.0" height="7.0" fill="rgb(150,150,150)"/><rect x="105.2" y="130.4" width="7.0" height="7.0" fill="rgb(150,150,150)"/><rect x="133.2" y="130.4" width="7.0" height="7.0" fill="rgb(150,150,150)"/><rect x="140.2" y="130.4" width="7.0" height="7.0" fill="rgb(238,238,238)"/><rect x="147.2" y="130.4" width="7.0" height="7.0" fill="rgb(104,104,104)"/><rect x="154.2" y="130.4" width="7.0" height="7.0" fill="rgb(238,238,238)"/><rect x="28.2" y="137.4" width="7.0" height="7.0" fill="rgb(204,204,204)"/><rect x="42.2" y="137.4" width="7.0" height="7.0" fill="rgb(104,104,104)"/><rect x="49.2" y="137.4" width="7.0" height="7.0" fill="rgb(104,104,104)"/><rect x="56.2" y="137.4" width="7.0" height="7.0" fill="rgb(238,238,238)"/><rect x="63.2" y="137.4" width="7.0" height="7.0" fill="rgb(104,104,104)"/><rect x="70.2" y="137.4" width="7.0" height="7.0" fill="rgb(204,204,204)"/><rect x="112.2" y="137.4" width="7.0" height="7.0" fill="rgb(150,150,150)"/><rect x="154.2" y="137.4" width="7.0" height="7.0" fill="rgb(104,104,104)"/><rect x="21.2" y="144.4" width="7.0" height="7.0" fill="rgb(150,150,150)"/><rect x="28.2" y="144.4" width="7.0" height="7.0" fill="rgb(150,150,150)"/><rect x="35.2" y="144.4" width="7.0" height="7.0" fill="rgb(104,104,104)"/><rect x="49.2" y="144.4" width="7.0" height="7.0" fill="rgb(150,150,150)"/><rect x="56.2" y="144.4" width="7.0" height="7.0" fill="rgb(150,150,150)"/><rect x="63.2" y="144.4" width="7.0" height="7.0" fill="rgb(104,104,104)"/><rect x="70.2" y="144.4" width="7.0" height="7.0" fill="rgb(104,104,104)"/><rect x="77.2" y="144.4" width="7.0" height="7.0" fill="rgb(204,204,204)"/><rect x="91.2" y="144.4" width="7.0" height="7.0" fill="rgb(104,104,104)"/><rect x="105.2" y="144.4" width="7.0" height="7.0" fill="rgb(150,150,150)"/><rect x="133.2" y="144.4" width="7.0" height="7.0" fill="rgb(150,150,150)"/><rect x="140.2" y="144.4" width="7.0" height="7.0" fill="rgb(238,238,238)"/><rect x="147.2" y="144.4" width="7.0" height="7.0" fill="rgb(104,104,104)"/><rect x="154.2" y="144.4" width="7.0" height="7.0" fill="rgb(238,238,238)"/><rect x="28.2" y="165.9" width="7.0" height="7.0" fill="rgb(238,238,238)"/><rect x="42.2" y="165.9" width="7.0" height="7.0" fill="rgb(238,238,238)"/><rect x="49.2" y="165.9" width="7.0" height="7.0" fill="rgb(204,204,204)"/><rect x="56.2" y="165.9" width="7.0" height="7.0" fill="rgb(204,204,204)"/><rect x="63.2" y="165.9" width="7.0" height="7.0" fill="rgb(238,238,238)"/><rect x="70.2" y="165.9" width="7.0" height="7.0" fill="rgb(104,104,104)"/><rect x="77.2" y="165.9" width="7.0" height="7.0" fill="rgb(204,204,204)"/><rect x="84.2" y="165.9" width="7.0" height="7.0" fill="rgb(104,104,104)"/><rect x="98.2" y="165.9" width="7.0" height="7.0" fill="rgb(150,150,150)"/><rect x="28.2" y="172.9" width="7.0" height="7.0" fill="rgb(238,238,238)"/><rect x="35.2" y="172.9" width="7.0" height="7.0" fill="rgb(104,104,104)"/><rect x="42.2" y="172.9" width="7.0" height="7.0" fill="rgb(104,104,104)"/><rect x="56.2" y="172.9" width="7.0" height="7.0" fill="rgb(104,104,104)"/><rect x="63.2" y="172.9" width="7.0" height="7.0" fill="rgb(150,150,150)"/><rect x="70.2" y="172.9" width="7.0" height="7.0" fill="rgb(104,104,104)"/><rect x="77.2" y="172.9" width="7.0" height="7.0" fill="rgb(150,150,150)"/><rect x="84.2" y="172.9" width="7.0" height="7.0" fill="rgb(104,104,104)"/><rect x="91.2" y="172.9" width="7.0" height="7.0" fill="rgb(150,150,150)"/><rect x="98.2" y="172.9" width="7.0" height="7.0" fill="rgb(150,150,150)"/><rect x="21.2" y="179.9" width="7.0" height="7.0" fill="rgb(104,104,104)"/><rect x="35.2" y="179.9" width="7.0" height="7.0" fill="rgb(104,104,104)"/><rect x="49.2" y="179.9" width="7.0" height="7.0" fill="rgb(150,150,150)"/><rect x="63.2" y="179.9" width="7.0" height="7.0" fill="rgb(104,104,104)"/><rect x="70.2" y="179.9" width="7.0" height="7.0" fill="rgb(238,238,238)"/><rect x="77.2" y="179.9" width="7.0" height="7.0" fill="rgb(150,150,150)"/><rect x="84.2" y="179.9" width="7.0" height="7.0" fill="rgb(238,238,238)"/><rect x="98.2" y="179.9" width="7.0" height="7.0" fill="rgb(150,150,150)"/><rect x="28.2" y="236.0" width="7.0" height="7.0" fill="rgb(150,150,150)"/><rect x="42.2" y="236.0" width="7.0" height="7.0" fill="rgb(150,150,150)"/><rect x="56.2" y="236.0" width="7.0" height="7.0" fill="rgb(104,104,104)"/><rect x="70.2" y="236.0" width="7.0" height="7.0" fill="rgb(104,104,104)"/><rect x="84.2" y="236.0" width="7.0" height="7.0" fill="rgb(104,104,104)"/><rect x="91.2" y="236.0" width="7.0" height="7.0" fill="rgb(204,204,204)"/><rect x="98.2" y="236.0" width="7.0" height="7.0" fill="rgb(204,204,204)"/><rect x="105.2" y="236.0" width="7.0" height="7.0" fill="rgb(150,150,150)"/><rect x="112.2" y="236.0" width="7.0" height="7.0" fill="rgb(204,204,204)"/><rect x="119.2" y="236.0" width="7.0" height="7.0" fill="rgb(104,104,104)"/><rect x="133.2" y="236.0" width="7.0" height="7.0" fill="rgb(104,104,104)"/><rect x="147.2" y="236.0" width="7.0" height="7.0" fill="rgb(104,104,104)"/><rect x="21.2" y="243.0" width="7.0" height="7.0" fill="rgb(104,104,104)"/><rect x="42.2" y="243.0" width="7.0" height="7.0" fill="rgb(104,104,104)"/><rect x="56.2" y="243.0" width="7.0" height="7.0" fill="rgb(104,104,104)"/><rect x="70.2" y="243.0" width="7.0" height="7.0" fill="rgb(150,150,150)"/><rect x="84.2" y="243.0" width="7.0" height="7.0" fill="rgb(150,150,150)"/><rect x="105.2" y="243.0" width="7.0" height="7.0" fill="rgb(204,204,204)"/><rect x="112.2" y="243.0" width="7.0" height="7.0" fill="rgb(238,238,238)"/><rect x="119.2" y="243.0" width="7.0" height="7.0" fill="rgb(104,104,104)"/><rect x="133.2" y="243.0" width="7.0" height="7.0" fill="rgb(104,104,104)"/><rect x="28.2" y="271.0" width="7.0" height="7.0" fill="rgb(204,204,204)"/><rect x="42.2" y="271.0" width="7.0" height="7.0" fill="rgb(150,150,150)"/><rect x="56.2" y="271.0" width="7.0" height="7.0" fill="rgb(104,104,104)"/><rect x="70.2" y="271.0" width="7.0" height="7.0" fill="rgb(238,238,238)"/><rect x="77.2" y="271.0" width="7.0" height="7.0" fill="rgb(238,238,238)"/><rect x="98.2" y="271.0" width="7.0" height="7.0" fill="rgb(204,204,204)"/><rect x="105.2" y="271.0" width="7.0" height="7.0" fill="rgb(204,204,204)"/><rect x="28.2" y="278.0" width="7.0" height="7.0" fill="rgb(104,104,104)"/><rect x="42.2" y="278.0" width="7.0" height="7.0" fill="rgb(150,150,150)"/><rect x="56.2" y="278.0" width="7.0" height="7.0" fill="rgb(104,104,104)"/><rect x="63.2" y="278.0" width="7.0" height="7.0" fill="rgb(150,150,150)"/><rect x="70.2" y="278.0" width="7.0" height="7.0" fill="rgb(150,150,150)"/><rect x="84.2" y="278.0" width="7.0" height="7.0" fill="rgb(150,150,150)"/><rect x="98.2" y="278.0" width="7.0" height="7.0" fill="rgb(238,238,238)"/><rect x="105.2" y="278.0" width="7.0" height="7.0" fill="rgb(238,238,238)"/><rect x="21.2" y="335.1" width="7.0" height="7.0" fill="rgb(238,238,238)"/><rect x="42.2" y="335.1" width="7.0" height="7.0" fill="rgb(238,238,238)"/><rect x="49.2" y="335.1" width="7.0" height="7.0" fill="rgb(238,238,238)"/><rect x="70.2" y="335.1" width="7.0" height="7.0" fill="rgb(204,204,204)"/><rect x="84.2" y="335.1" width="7.0" height="7.0" fill="rgb(238,238,238)"/><rect x="98.2" y="335.1" width="7.0" height="7.0" fill="rgb(238,238,238)"/><rect x="112.2" y="335.1" width="7.0" height="7.0" fill="rgb(204,204,204)"/><rect x="126.2" y="335.1" width="7.0" height="7.0" fill="rgb(238,238,238)"/><rect x="140.2" y="335.1" width="7.0" height="7.0" fill="rgb(238,238,238)"/><rect x="21.2" y="342.1" width="7.0" height="7.0" fill="rgb(104,104,104)"/><rect x="28.2" y="342.1" width="7.0" height="7.0" fill="rgb(150,150,150)"/><rect x="35.2" y="342.1" width="7.0" height="7.0" fill="rgb(150,150,150)"/><rect x="42.2" y="342.1" width="7.0" height="7.0" fill="rgb(104,104,104)"/><rect x="49.2" y="342.1" width="7.0" height="7.0" fill="rgb(104,104,104)"/><rect x="70.2" y="342.1" width="7.0" height="7.0" fill="rgb(104,104,104)"/><rect x="98.2" y="342.1" width="7.0" height="7.0" fill="rgb(104,104,104)"/><rect x="126.2" y="342.1" width="7.0" height="7.0" fill="rgb(104,104,104)"/><rect x="147.2" y="342.1" width="7.0" height="7.0" fill="rgb(150,150,150)"/><rect x="21.2" y="349.1" width="7.0" height="7.0" fill="rgb(104,104,104)"/><rect x="28.2" y="349.1" width="7.0" height="7.0" fill="rgb(104,104,104)"/><rect x="35.2" y="349.1" width="7.0" height="7.0" fill="rgb(238,238,238)"/><rect x="42.2" y="349.1" width="7.0" height="7.0" fill="rgb(104,104,104)"/><rect x="84.2" y="349.1" width="7.0" height="7.0" fill="rgb(104,104,104)"/><rect x="21.2" y="440.4" width="7.0" height="7.0" fill="rgb(104,104,104)"/><rect x="28.2" y="440.4" width="7.0" height="7.0" fill="rgb(104,104,104)"/><rect x="35.2" y="440.4" width="7.0" height="7.0" fill="rgb(150,150,150)"/><rect x="42.2" y="440.4" width="7.0" height="7.0" fill="rgb(150,150,150)"/><rect x="49.2" y="440.4" width="7.0" height="7.0" fill="rgb(150,150,150)"/><rect x="56.2" y="440.4" width="7.0" height="7.0" fill="rgb(150,150,150)"/><rect x="63.2" y="440.4" width="7.0" height="7.0" fill="rgb(204,204,204)"/><rect x="84.2" y="440.4" width="7.0" height="7.0" fill="rgb(150,150,150)"/><rect x="21.2" y="447.4" width="7.0" height="7.0" fill="rgb(104,104,104)"/><rect x="28.2" y="447.4" width="7.0" height="7.0" fill="rgb(104,104,104)"/><rect x="35.2" y="447.4" width="7.0" height="7.0" fill="rgb(238,238,238)"/><rect x="42.2" y="447.4" width="7.0" height="7.0" fill="rgb(104,104,104)"/><rect x="56.2" y="447.4" width="7.0" height="7.0" fill="rgb(104,104,104)"/><rect x="70.2" y="447.4" width="7.0" height="7.0" fill="rgb(104,104,104)"/><rect x="105.2" y="447.4" width="7.0" height="7.0" fill="rgb(204,204,204)"/><rect x="119.2" y="447.4" width="7.0" height="7.0" fill="rgb(104,104,104)"/><rect x="147.2" y="447.4" width="7.0" height="7.0" fill="rgb(150,150,150)"/><rect x="21.2" y="454.4" width="7.0" height="7.0" fill="rgb(104,104,104)"/><rect x="35.2" y="454.4" width="7.0" height="7.0" fill="rgb(150,150,150)"/><rect x="49.2" y="454.4" width="7.0" height="7.0" fill="rgb(150,150,150)"/><rect x="63.2" y="454.4" width="7.0" height="7.0" fill="rgb(150,150,150)"/><rect x="77.2" y="454.4" width="7.0" height="7.0" fill="rgb(104,104,104)"/><rect x="98.2" y="454.4" width="7.0" height="7.0" fill="rgb(104,104,104)"/><rect x="112.2" y="454.4" width="7.0" height="7.0" fill="rgb(104,104,104)"/><rect x="126.2" y="454.4" width="7.0" height="7.0" fill="rgb(104,104,104)"/><rect x="140.2" y="454.4" width="7.0" height="7.0" fill="rgb(104,104,104)"/><rect x="21.2" y="545.7" width="7.0" height="7.0" fill="rgb(104,104,104)"/><rect x="28.2" y="545.7" width="7.0" height="7.0" fill="rgb(104,104,104)"/><rect x="42.2" y="545.7" width="7.0" height="7.0" fill="rgb(104,104,104)"/><rect x="56.2" y="545.7" width="7.0" height="7.0" fill="rgb(104,104,104)"/><rect x="70.2" y="545.7" width="7.0" height="7.0" fill="rgb(150,150,150)"/><rect x="84.2" y="545.7" width="7.0" height="7.0" fill="rgb(204,204,204)"/><rect x="98.2" y="545.7" width="7.0" height="7.0" fill="rgb(204,204,204)"/><rect x="119.2" y="545.7" width="7.0" height="7.0" fill="rgb(150,150,150)"/><rect x="126.2" y="545.7" width="7.0" height="7.0" fill="rgb(150,150,150)"/><rect x="140.2" y="545.7" width="7.0" height="7.0" fill="rgb(104,104,104)"/><rect x="21.2" y="552.7" width="7.0" height="7.0" fill="rgb(104,104,104)"/><rect x="28.2" y="552.7" width="7.0" height="7.0" fill="rgb(150,150,150)"/><rect x="42.2" y="552.7" width="7.0" height="7.0" fill="rgb(104,104,104)"/><rect x="84.2" y="552.7" width="7.0" height="7.0" fill="rgb(150,150,150)"/><rect x="119.2" y="552.7" width="7.0" height="7.0" fill="rgb(104,104,104)"/><rect x="126.2" y="552.7" width="7.0" height="7.0" fill="rgb(150,150,150)"/><rect x="21.2" y="644.0" width="7.0" height="7.0" fill="rgb(238,238,238)"/><rect x="35.2" y="644.0" width="7.0" height="7.0" fill="rgb(238,238,238)"/><rect x="49.2" y="644.0" width="7.0" height="7.0" fill="rgb(238,238,238)"/><rect x="63.2" y="644.0" width="7.0" height="7.0" fill="rgb(238,238,238)"/><rect x="126.2" y="644.0" width="7.0" height="7.0" fill="rgb(238,238,238)"/><rect x="140.2" y="644.0" width="7.0" height="7.0" fill="rgb(238,238,238)"/><rect x="154.2" y="644.0" width="7.0" height="7.0" fill="rgb(238,238,238)"/><rect x="28.2" y="651.0" width="7.0" height="7.0" fill="rgb(238,238,238)"/><rect x="42.2" y="651.0" width="7.0" height="7.0" fill="rgb(104,104,104)"/><rect x="49.2" y="651.0" width="7.0" height="7.0" fill="rgb(204,204,204)"/><rect x="56.2" y="651.0" width="7.0" height="7.0" fill="rgb(204,204,204)"/><rect x="63.2" y="651.0" width="7.0" height="7.0" fill="rgb(150,150,150)"/><rect x="70.2" y="651.0" width="7.0" height="7.0" fill="rgb(104,104,104)"/><rect x="84.2" y="651.0" width="7.0" height="7.0" fill="rgb(104,104,104)"/><rect x="91.2" y="651.0" width="7.0" height="7.0" fill="rgb(238,238,238)"/><rect x="98.2" y="651.0" width="7.0" height="7.0" fill="rgb(238,238,238)"/><rect x="105.2" y="651.0" width="7.0" height="7.0" fill="rgb(204,204,204)"/><rect x="126.2" y="651.0" width="7.0" height="7.0" fill="rgb(150,150,150)"/><rect x="133.2" y="651.0" width="7.0" height="7.0" fill="rgb(104,104,104)"/><rect x="140.2" y="651.0" width="7.0" height="7.0" fill="rgb(104,104,104)"/><rect x="147.2" y="651.0" width="7.0" height="7.0" fill="rgb(104,104,104)"/><rect x="21.2" y="658.0" width="7.0" height="7.0" fill="rgb(238,238,238)"/><rect x="42.2" y="658.0" width="7.0" height="7.0" fill="rgb(204,204,204)"/><rect x="56.2" y="658.0" width="7.0" height="7.0" fill="rgb(104,104,104)"/><rect x="70.2" y="658.0" width="7.0" height="7.0" fill="rgb(104,104,104)"/><rect x="77.2" y="658.0" width="7.0" height="7.0" fill="rgb(104,104,104)"/><rect x="91.2" y="658.0" width="7.0" height="7.0" fill="rgb(104,104,104)"/><rect x="98.2" y="658.0" width="7.0" height="7.0" fill="rgb(104,104,104)"/><rect x="105.2" y="658.0" width="7.0" height="7.0" fill="rgb(104,104,104)"/><rect x="112.2" y="658.0" width="7.0" height="7.0" fill="rgb(150,150,150)"/><rect x="119.2" y="658.0" width="7.0" height="7.0" fill="rgb(104,104,104)"/><rect x="133.2" y="658.0" width="7.0" height="7.0" fill="rgb(104,104,104)"/><rect x="147.2" y="658.0" width="7.0" height="7.0" fill="rgb(104,104,104)"/><rect x="21.2" y="679.0" width="7.0" height="7.0" fill="rgb(104,104,104)"/><rect x="35.2" y="679.0" width="7.0" height="7.0" fill="rgb(104,104,104)"/><rect x="49.2" y="679.0" width="7.0" height="7.0" fill="rgb(104,104,104)"/><rect x="56.2" y="679.0" width="7.0" height="7.0" fill="rgb(104,104,104)"/><rect x="63.2" y="679.0" width="7.0" height="7.0" fill="rgb(150,150,150)"/><rect x="70.2" y="679.0" width="7.0" height="7.0" fill="rgb(238,238,238)"/><rect x="77.2" y="679.0" width="7.0" height="7.0" fill="rgb(104,104,104)"/><rect x="84.2" y="679.0" width="7.0" height="7.0" fill="rgb(104,104,104)"/><rect x="91.2" y="679.0" width="7.0" height="7.0" fill="rgb(104,104,104)"/><rect x="21.2" y="686.0" width="7.0" height="7.0" fill="rgb(150,150,150)"/><rect x="42.2" y="686.0" width="7.0" height="7.0" fill="rgb(104,104,104)"/><rect x="49.2" y="686.0" width="7.0" height="7.0" fill="rgb(150,150,150)"/><rect x="56.2" y="686.0" width="7.0" height="7.0" fill="rgb(204,204,204)"/><rect x="70.2" y="686.0" width="7.0" height="7.0" fill="rgb(150,150,150)"/><rect x="28.2" y="693.0" width="7.0" height="7.0" fill="rgb(238,238,238)"/><rect x="56.2" y="693.0" width="7.0" height="7.0" fill="rgb(150,150,150)"/><rect x="63.2" y="693.0" width="7.0" height="7.0" fill="rgb(204,204,204)"/><rect x="77.2" y="693.0" width="7.0" height="7.0" fill="rgb(238,238,238)"/><rect x="91.2" y="693.0" width="7.0" height="7.0" fill="rgb(238,238,238)"/><rect x="98.2" y="693.0" width="7.0" height="7.0" fill="rgb(104,104,104)"/><rect x="21.2" y="749.3" width="7.0" height="7.0" fill="rgb(104,104,104)"/><rect x="28.2" y="749.3" width="7.0" height="7.0" fill="rgb(104,104,104)"/><rect x="35.2" y="749.3" width="7.0" height="7.0" fill="rgb(150,150,150)"/><rect x="42.2" y="749.3" width="7.0" height="7.0" fill="rgb(104,104,104)"/><rect x="56.2" y="749.3" width="7.0" height="7.0" fill="rgb(104,104,104)"/><rect x="21.2" y="756.3" width="7.0" height="7.0" fill="rgb(104,104,104)"/><rect x="28.2" y="756.3" width="7.0" height="7.0" fill="rgb(104,104,104)"/><rect x="35.2" y="756.3" width="7.0" height="7.0" fill="rgb(238,238,238)"/><rect x="42.2" y="756.3" width="7.0" height="7.0" fill="rgb(204,204,204)"/><rect x="84.2" y="756.3" width="7.0" height="7.0" fill="rgb(238,238,238)"/><rect x="147.2" y="756.3" width="7.0" height="7.0" fill="rgb(150,150,150)"/><rect x="21.2" y="763.3" width="7.0" height="7.0" fill="rgb(104,104,104)"/><rect x="35.2" y="763.3" width="7.0" height="7.0" fill="rgb(150,150,150)"/><rect x="49.2" y="763.3" width="7.0" height="7.0" fill="rgb(150,150,150)"/><rect x="70.2" y="763.3" width="7.0" height="7.0" fill="rgb(104,104,104)"/><rect x="84.2" y="763.3" width="7.0" height="7.0" fill="rgb(204,204,204)"/><rect x="98.2" y="763.3" width="7.0" height="7.0" fill="rgb(104,104,104)"/><rect x="112.2" y="763.3" width="7.0" height="7.0" fill="rgb(104,104,104)"/><rect x="126.2" y="763.3" width="7.0" height="7.0" fill="rgb(104,104,104)"/><rect x="140.2" y="763.3" width="7.0" height="7.0" fill="rgb(104,104,104)"/><rect x="21.2" y="854.5" width="7.0" height="7.0" fill="rgb(104,104,104)"/><rect x="28.2" y="854.5" width="7.0" height="7.0" fill="rgb(104,104,104)"/><rect x="42.2" y="854.5" width="7.0" height="7.0" fill="rgb(104,104,104)"/><rect x="56.2" y="854.5" width="7.0" height="7.0" fill="rgb(238,238,238)"/><rect x="147.2" y="854.5" width="7.0" height="7.0" fill="rgb(204,204,204)"/><rect x="21.2" y="861.5" width="7.0" height="7.0" fill="rgb(104,104,104)"/><rect x="28.2" y="861.5" width="7.0" height="7.0" fill="rgb(150,150,150)"/><rect x="84.2" y="861.5" width="7.0" height="7.0" fill="rgb(150,150,150)"/><rect x="133.2" y="861.5" width="7.0" height="7.0" fill="rgb(238,238,238)"/><rect x="147.2" y="861.5" width="7.0" height="7.0" fill="rgb(204,204,204)"/></svg><svg class="ic" style="left:3255.7px;top:1275.3px;z-index:7" width="84.4" height="84.4" viewBox="-6 -6 84.4 84.4"><circle cx="36.2" cy="36.6" r="37.6" fill="none" stroke="#000" stroke-opacity=".05" stroke-width="2.6"/><circle cx="36.2" cy="36.2" r="36.2" fill="#e9e9e8" stroke="#d4d4d4" stroke-width=".8"/><circle cx="36.2" cy="35.9" r="29.9" fill="#cdcccb"/><g><path d="M19.6 46.2 C18.2 36 19 24 24.5 16.5 C28.5 11 35 9.6 40.5 11.2 C47 12.6 51.5 17.5 52.4 25 C53.2 33 52 41 50.6 47.6 L44 47.6 L44 30 L28 30 L26.5 47.8 Z" fill="#43342f"/><path d="M21.4 61.6 C22.5 56 26 53.6 30 53 L43.5 53 C47.5 53.6 50.4 56 51.2 61.4 A29.9 29.9 0 0 1 21.4 61.6 Z" fill="#1b1b1d"/><path d="M32.6 44 H42.2 V52.6 C41.6 56.2 39 57.6 37.4 57.6 C35.6 57.6 33.2 56.2 32.6 52.6 Z" fill="#f3cfc3"/><ellipse cx="52.2" cy="37.4" rx="2.3" ry="3" fill="#f3cbbd"/><path d="M27.2 33 C27.2 24.5 32 20.2 39 20.2 C46.4 20.2 51.2 24.8 51.2 33 C51.2 41.2 45.6 48 39.2 48 C33 48 27.2 41.4 27.2 33 Z" fill="#f8e0d8"/><path d="M26.4 36 C24.8 26 28 17.6 36.5 15 C44.5 13.6 50.6 18.6 51.6 28.6 C48.6 25.6 45.2 22.8 41.2 21.4 C36.6 23.6 30.4 27.4 26.4 36 Z" fill="#43342f"/><path d="M19.6 46.4 C18.6 34 21 22 29 15.2 C25.4 24 25.8 36 26.8 47.8 Z" fill="#4c3b36"/><ellipse cx="30.6" cy="33.9" rx="2.5" ry="2.7" fill="#33221f"/><ellipse cx="45" cy="34.6" rx="2.5" ry="2.7" fill="#33221f"/><path d="M27.4 30 Q30.4 28.2 33.6 29.2 M42.4 29.6 Q45.6 28.6 48.4 30.6" stroke="#5a4540" stroke-width="1" fill="none" stroke-linecap="round"/><ellipse cx="38.2" cy="43" rx="2.6" ry="1.3" fill="#d88f83"/><ellipse cx="31" cy="38.6" rx="2.6" ry="1.5" fill="#f3c4bb" opacity=".7"/><ellipse cx="45.6" cy="39.2" rx="2.6" ry="1.5" fill="#f3c4bb" opacity=".7"/><circle cx="38" cy="61.6" r=".9" fill="#9aa3ad"/></g></svg><div class="abs" style="left:1120px;top:1790px;width:1120px;height:60px;border-radius:40px;box-shadow:0 0 70px 30px rgba(40,40,60,.30);z-index:8"></div><svg class="ic" style="left:3338px;top:1746px;z-index:9" width="20" height="20" viewBox="0 0 20 20"><path d="M20 5.5 Q18.5 15 11.5 20 H20 Z" fill="#000"/></svg><svg class="ic" style="left:0;top:1746px;z-index:9" width="20" height="20" viewBox="0 0 20 20"><path d="M0 9.5 Q1.6 16.4 8 20 H0 Z" fill="#05070a"/></svg>
</div>
</body>
</html>
